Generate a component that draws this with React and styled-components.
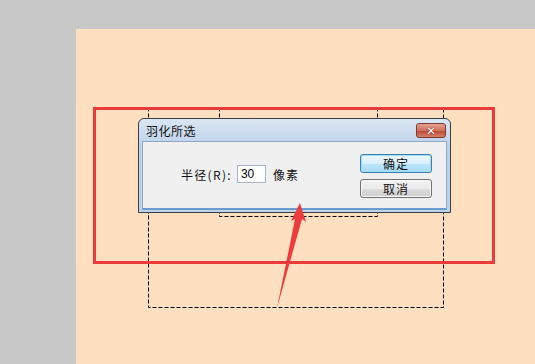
import React from 'react';
import styled, { createGlobalStyle } from 'styled-components';

const Global = createGlobalStyle`
  html, body {
    margin: 0;
    padding: 0;
    background: #c8c8c8;
  }
  body {
    font-family: "Noto Sans CJK SC", "Liberation Sans", sans-serif;
  }
`;

const Page = styled.div`
  width: 535px;
  height: 364px;
  padding: 29px 0 0 76px;
  box-sizing: border-box;
  display: flex;
  overflow: hidden;
`;

const Canvas = styled.div`
  position: relative;
  flex: 1;
  background: #fedfc0;
`;

const Overlay = styled.svg`
  position: absolute;
  left: 0;
  top: 0;
  width: 459px;
  height: 335px;
  z-index: ${(p) => p.$z};
  pointer-events: none;
`;

const Dialog = styled.div`
  position: absolute;
  left: 62px;
  top: 89px;
  width: 313px;
  height: 95px;
  box-sizing: border-box;
  border: 1px solid #3a3d42;
  border-radius: 6px 6px 0 0;
  background: linear-gradient(#dae6f3, #bcd2ea 30%, #bdd3ea);
  display: flex;
  flex-direction: column;
  padding: 0 3px 2px;
  z-index: 2;
`;

const TitleBar = styled.div`
  height: 22px;
  display: flex;
  align-items: center;
  justify-content: space-between;
  padding: 0 1px 0 4px;
`;

const Title = styled.span`
  font-size: 12px;
  color: #111;
  letter-spacing: 0.5px;
`;

const CloseBtn = styled.div`
  width: 30px;
  height: 15px;
  margin-top: 1px;
  box-sizing: border-box;
  border: 1px solid #7a3a32;
  border-radius: 3px;
  background: linear-gradient(#e6a293, #d3705e 50%, #c04a34 55%, #d4806c);
  display: flex;
  align-items: center;
  justify-content: center;
  color: #fff;
  font: bold 12px "DejaVu Sans", sans-serif;
  line-height: 1;
  text-shadow: 0 0 1px #6a1c10, 0 0 1px #6a1c10;
`;

const Body = styled.div`
  flex: 1;
  background: #f0f0f0;
  border: 1px solid #8da7c4;
  border-bottom: 2px solid #6b9ccf;
  display: flex;
  align-items: center;
  justify-content: space-between;
  padding: 0 14px 0 38px;
`;

const Field = styled.div`
  display: flex;
  align-items: center;
  gap: 5px;
  font-size: 12px;
  color: #111;
  margin-top: -2px;
`;

const Label = styled.span`
  letter-spacing: 1.3px;
`;

const Unit = styled.span`
  margin-left: 2px;
  letter-spacing: 1px;
`;

const Input = styled.div`
  width: 29px;
  height: 18px;
  box-sizing: border-box;
  background: #fff;
  border: 1px solid #a9b4c4;
  font: 12px "Liberation Sans", sans-serif;
  line-height: 16px;
  padding-left: 3px;
  color: #000;
`;

const Buttons = styled.div`
  display: flex;
  flex-direction: column;
  gap: 6px;
  padding-top: 1px;
`;

const Button = styled.div`
  width: 72px;
  height: 19px;
  box-sizing: border-box;
  border: 1px solid ${(p) => (p.$default ? '#3c7fb1' : '#707070')};
  border-radius: 3px;
  background: ${(p) =>
    p.$default
      ? 'linear-gradient(#eaf6fd, #d9f0fc 50%, #bee6fd 51%, #a7d9f5)'
      : 'linear-gradient(#f2f2f2, #ebebeb 50%, #dddddd 51%, #cfcfcf)'};
  box-shadow: ${(p) => (p.$default ? 'inset 0 0 0 1px #9fe0f7' : 'inset 0 0 0 1px #fcfcfc')};
  display: flex;
  align-items: center;
  justify-content: center;
  font-size: 12px;
  color: #111;
  letter-spacing: 1px;
`;

export default function App() {
  return (
    <Page>
      <Global />
      <Canvas>
        <Overlay $z={1} viewBox="0 0 459 335">
          <g fill="none" stroke="#000" strokeWidth="1" strokeDasharray="4 2">
            <rect x="72.5" y="80.5" width="295" height="198" />
            <rect x="143.5" y="80.5" width="158" height="107" />
          </g>
          <rect x="18.5" y="79.5" width="399" height="154" fill="none" stroke="#ea3a3c" strokeWidth="3" />
        </Overlay>
        <Dialog>
          <TitleBar>
            <Title>羽化所选</Title>
            <CloseBtn>✕</CloseBtn>
          </TitleBar>
          <Body>
            <Field>
              <Label>半径(R):</Label>
              <Input>30</Input>
              <Unit>像素</Unit>
            </Field>
            <Buttons>
              <Button $default>确定</Button>
              <Button>取消</Button>
            </Buttons>
          </Body>
        </Dialog>
        <Overlay $z={3} viewBox="0 0 459 335">
          <polygon
            points="224,174 230,193 226,190 201,279 219,190 215,192"
            fill="#ee3b3b"
          />
        </Overlay>
      </Canvas>
    </Page>
  );
}
